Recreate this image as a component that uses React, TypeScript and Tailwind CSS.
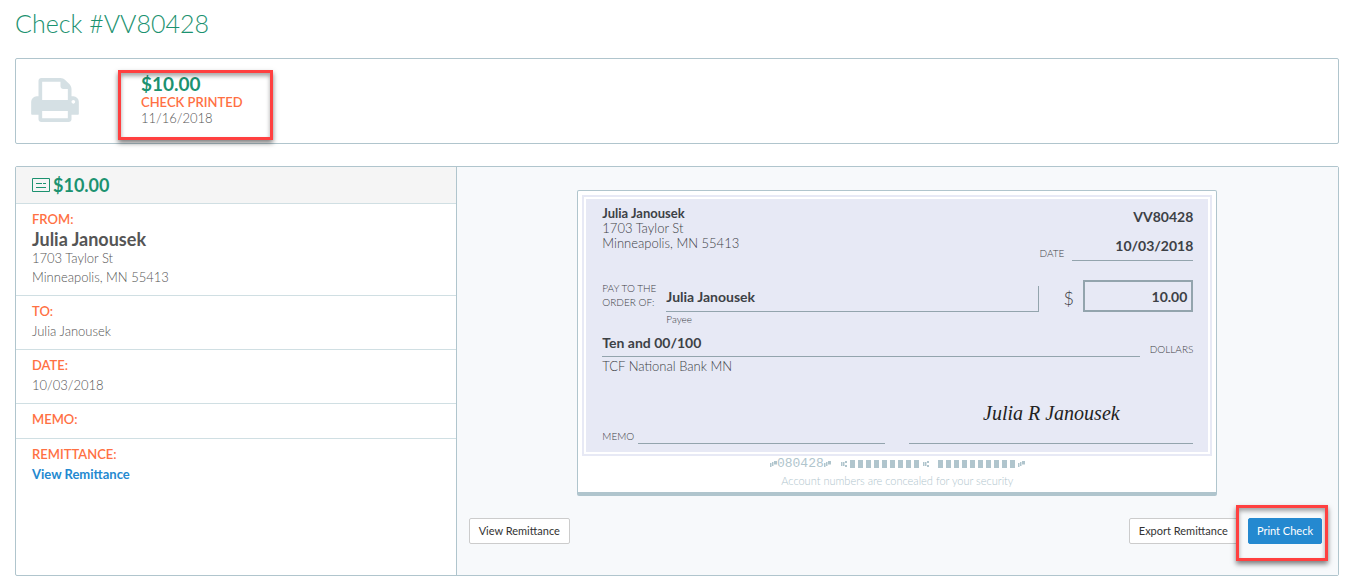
import type { ReactNode } from "react";

function PrinterIcon() {
  return (
    <svg viewBox="64 128 1664 1536" className="h-11 w-12 shrink-0 fill-[#d5e0e4]" aria-hidden="true">
      <path d="M448 1536h896v-256h-896v256zm0-640h896v-384h-160q-40 0-68-28t-28-68v-160h-640v640zm1152 64q0-26-19-45t-45-19-45 19-19 45 19 45 45 19 45-19 19-45zm128 0v416q0 13-9.500 22.500t-22.500 9.500h-224v160q0 40-28 68t-68 28h-960q-40 0-68-28t-28-68v-160h-224q-13 0-22.500-9.500t-9.500-22.500v-416q0-79 56.500-135.500t135.500-56.500h64v-544q0-40 28-68t68-28h672q40 0 88 20t76 48l152 152q28 28 48 76t20 88v256h64q79 0 135.500 56.500t56.500 135.500z" />
    </svg>
  );
}

function CheckIcon() {
  return (
    <svg viewBox="0 0 18 14" className="h-3.5 w-[18px] shrink-0 fill-none stroke-[#1c9270]" aria-hidden="true">
      <path d="M.5.5h17v13H.5zM4 5.500h6M11 5.500h3M4 9.500h10" />
    </svg>
  );
}

function OnUs() {
  return (
    <svg viewBox="0 0 7 8" className="h-2 w-[7px] fill-[#b0c5cd]" aria-hidden="true">
      <path d="M0 3h1.500v4H0zM2 2h1.500v4H2zM4 1h3v3.500H4z" />
    </svg>
  );
}

function Transit() {
  return (
    <svg viewBox="0 0 7 8" className="h-2 w-[7px] fill-[#b0c5cd]" aria-hidden="true">
      <path d="M0 2h1.500v4H0zM2 2h1.500v4H2zM4 1h2v2H4zM4 5h2v2H4z" />
    </svg>
  );
}

function Blocks({ count }: { count: number }) {
  return (
    <span className="flex gap-[3px]">
      {Array.from({ length: count }, (_, i) => (
        <span key={i} className="h-2 w-[5px] bg-[#b0c5cd]" />
      ))}
    </span>
  );
}

function Section({ label, children }: { label: string; children?: ReactNode }) {
  return (
    <section className="min-h-[35px] border-b border-[#d0dfe3] px-4 pt-[5px] pb-2 leading-5 last:border-b-0">
      <h3 className="font-semibold text-[#ff7043]">{label}</h3>
      {children}
    </section>
  );
}

const plainButton =
  "h-[26px] rounded-xs border border-[#ccc] bg-white px-[9px] text-[11px] font-normal text-[#333]";

export default function App() {
  return (
    <main className="bg-white pt-[7px] pr-3 pb-[5px] pl-[15px] font-['Lato',sans-serif] text-[13px] font-light text-[#555]">
      <h1 className="text-[25px] leading-8 text-[#1c9270]">Check #VV80428</h1>

      <section className="mt-[19px] flex h-[86px] items-center rounded-xs border border-[#b0c5cd] pb-0.5 pl-[15px]">
        <PrinterIcon />
        <div className="relative ml-[62px]">
          <p className="text-[19px] leading-5 font-bold text-[#1c9270]">$10.00</p>
          <p className="leading-4 font-semibold text-[#ff7043]">CHECK PRINTED</p>
          <p className="leading-4">11/16/2018</p>
          <div className="pointer-events-none absolute -top-1 -left-[23px] h-[70px] w-[155px] border-3 border-[#ff4040] shadow-[0_3px_5px_rgba(0,0,0,0.5),inset_0_3px_4px_rgba(0,0,0,0.35)]" />
        </div>
      </section>

      <div className="mt-[22px] grid grid-cols-[1fr_2fr] rounded-xs border border-[#b0c5cd]">
        <aside className="border-r border-[#b0c5cd]">
          <h2 className="flex h-[37px] items-center gap-[3px] border-b border-[#d0dfe3] bg-[#f5f5f5] px-4 text-lg font-bold text-[#1c9270]">
            <CheckIcon />
            $10.00
          </h2>
          <Section label="FROM:">
            <p className="text-lg leading-5 font-bold">Julia Janousek</p>
            <p className="leading-[19px]">1703 Taylor St</p>
            <p className="leading-[19px]">Minneapolis, MN 55413</p>
          </Section>
          <Section label="TO:">
            <p>Julia Janousek</p>
          </Section>
          <Section label="DATE:">
            <p>10/03/2018</p>
          </Section>
          <Section label="MEMO:" />
          <Section label="REMITTANCE:">
            <a href="#remittance" className="font-bold text-[#2489d0]">
              View Remittance
            </a>
          </Section>
        </aside>

        <div className="bg-[#f7f9fb] px-3 pt-[23px] pb-[31px]">
          <article className="mx-auto max-w-[640px] rounded-xs border border-b-4 border-[#b0c5cd] bg-white p-1 pb-0 text-[#3d4146]">
            <div className="border-2 border-[#e7e9f5] p-0.5">
              <div className="bg-[#e7e9f5] pt-[7px] pr-[15px] pb-2 pl-4">
                <div className="flex h-[74px] justify-between">
                  <address className="leading-[15px] not-italic">
                    <p className="font-bold">Julia Janousek</p>
                    <p>1703 Taylor St</p>
                    <p>Minneapolis, MN 55413</p>
                  </address>
                  <div className="text-right text-sm font-bold">
                    <p className="pt-0.5 leading-[18px]">VV80428</p>
                    <p className="mt-2.5 flex items-end gap-2">
                      <span className="text-[10px] leading-4 font-light">DATE</span>
                      <span className="w-[121px] border-b border-[#93a4ad] pb-1 leading-5">10/03/2018</span>
                    </p>
                  </div>
                </div>

                <div className="flex h-[54px] items-start">
                  <p className="w-16 pt-px text-[10px] leading-[14px]">
                    PAY TO THE
                    <br />
                    ORDER OF:
                  </p>
                  <div className="flex-1 pt-[6px]">
                    <p className="h-[26px] border-r border-b border-[#93a4ad] text-sm leading-[22px] font-bold">
                      Julia Janousek
                    </p>
                    <p className="text-[10px] leading-[14px]">Payee</p>
                  </div>
                  <span className="w-11 pt-2 pr-px pl-4 text-center text-lg leading-5">$</span>
                  <p className="h-8 w-[110px] border-2 border-[#93a4ad] pr-1 text-right text-sm leading-[30px] font-bold">
                    10.00
                  </p>
                </div>

                <div className="flex items-end gap-2.5">
                  <p className="flex-1 border-b border-[#93a4ad] pb-1 text-sm leading-[18px] font-bold">
                    Ten and 00/100
                  </p>
                  <span className="text-[10px] leading-4">DOLLARS</span>
                </div>
                <p className="leading-[18px]">TCF National Bank MN</p>

                <div className="mt-[22px] flex h-[47px] items-end">
                  <span className="mr-1 text-[10px] leading-4">MEMO</span>
                  <span className="flex-1 border-b border-[#93a4ad]" />
                  <p className="ml-6 h-[47px] w-[284px] border-b border-[#93a4ad] text-center font-['Z003','URW_Chancery_L',cursive] text-xl leading-8 italic text-[#222]">
                    Julia R Janousek
                  </p>
                </div>
              </div>
            </div>

            <div className="flex h-4 items-center justify-center">
              <OnUs />
              <span className="font-['Liberation_Mono',monospace] text-[13px] leading-4 font-normal text-[#b0c5cd]">080428</span>
              <OnUs />
              <span className="ml-2.5 flex gap-0.5">
                <Transit />
                <Blocks count={9} />
              </span>
              <span className="ml-1 flex gap-2">
                <Transit />
                <Blocks count={10} />
              </span>
              <span className="ml-[3px]">
                <OnUs />
              </span>
            </div>
            <p className="pb-[3px] text-center text-[11px] leading-[17px] text-[#b0c5cd]">
              Account numbers are concealed for your security
            </p>
          </article>

          <div className="mt-[22px] flex items-center justify-between pr-1">
            <button type="button" className={plainButton}>
              View Remittance
            </button>
            <div className="flex gap-2.5">
              <button type="button" className={plainButton}>
                Export Remittance
              </button>
              <div className="relative">
                <button
                  type="button"
                  className="h-[26px] rounded-xs border border-[#2489d0] bg-[#2489d0] px-2 text-[11px] font-normal text-white"
                >
                  Print Check
                </button>
                <div className="pointer-events-none absolute -top-[13px] -right-[6px] h-[56px] w-[92px] border-3 border-[#ff4040] shadow-[0_3px_5px_rgba(0,0,0,0.5),inset_0_3px_4px_rgba(0,0,0,0.35)]" />
              </div>
            </div>
          </div>
        </div>
      </div>
    </main>
  );
}
